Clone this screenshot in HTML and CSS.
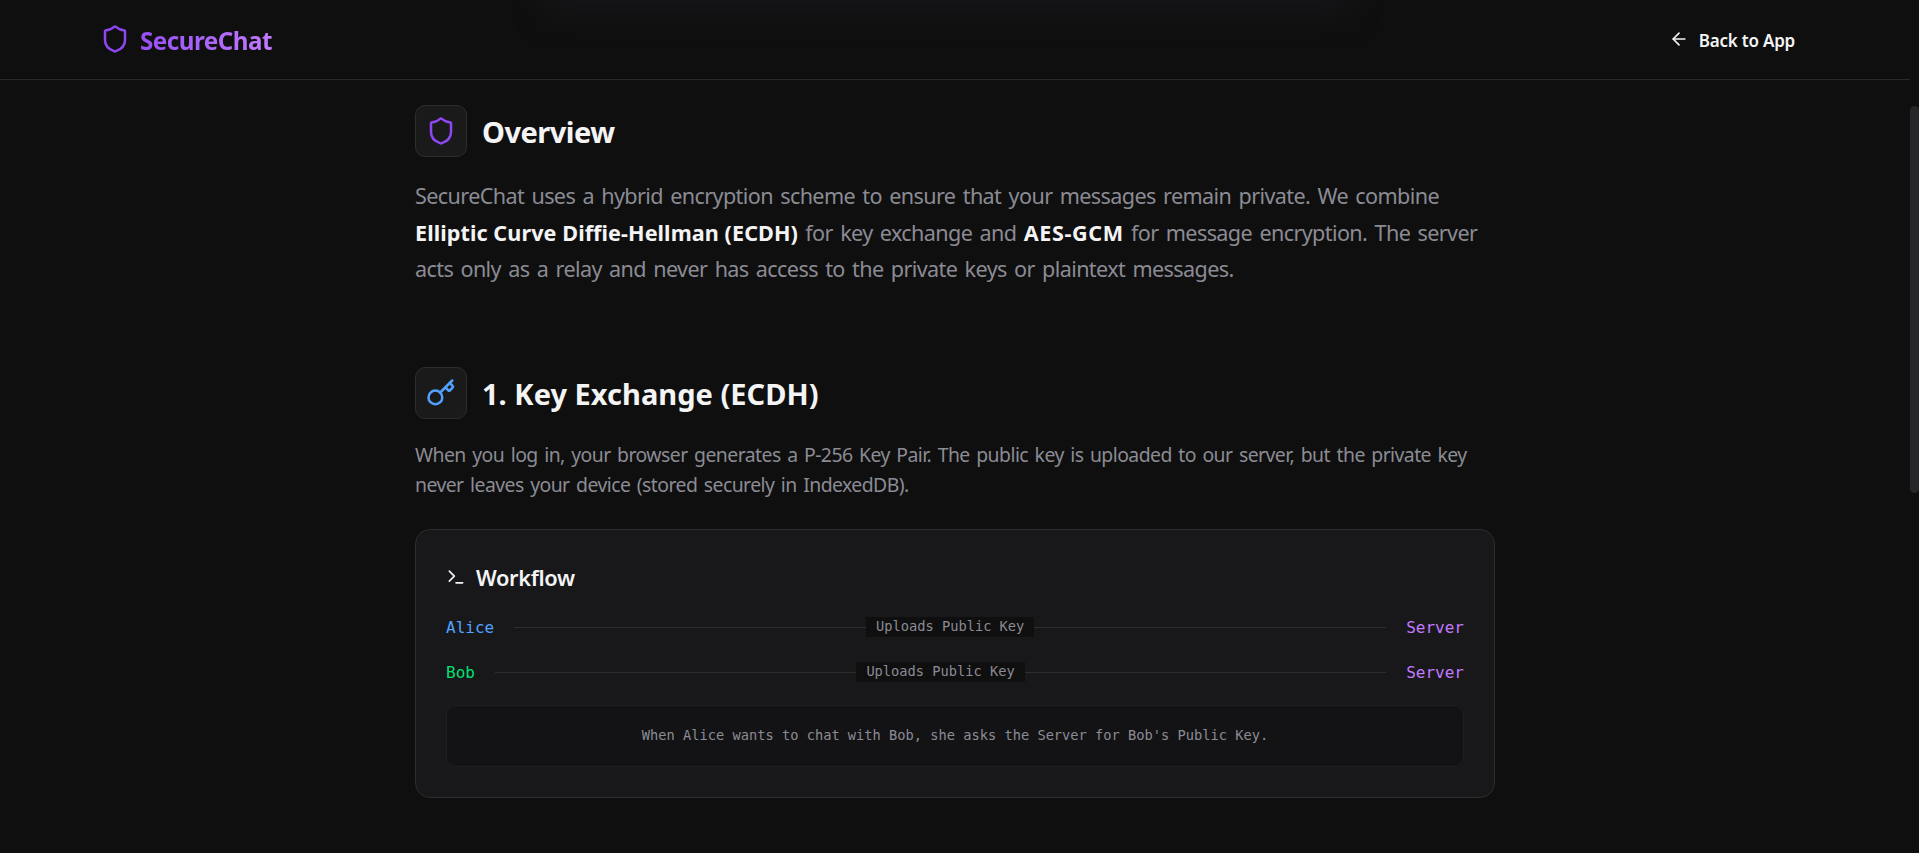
FILE: index.html
```
<!DOCTYPE html>
<html lang="en">
<head>
<meta charset="utf-8">
<title>SecureChat</title>
<link rel="stylesheet" href="styles.css">
</head>
<body>
<div class="page">
  <header class="header">
    <div class="glow"></div>
    <div class="brand">
      <svg class="icon-lg purple" viewBox="0 0 24 24"><path d="M20 13c0 5-3.5 7.5-7.66 8.95a1 1 0 0 1-.67-.01C7.5 20.5 4 18 4 13V6a1 1 0 0 1 1-1c2 0 4.5-1.2 6.24-2.72a1.17 1.17 0 0 1 1.52 0C14.51 3.81 17 5 19 5a1 1 0 0 1 1 1z"/></svg>
      <span class="brand-name">SecureChat</span>
    </div>
    <a class="back">
      <svg class="icon-sm" viewBox="0 0 24 24"><path d="m12 19-7-7 7-7"/><path d="M19 12H5"/></svg>
      <span>Back to App</span>
    </a>
  </header>

  <main class="content">
    <section>
      <div class="section-head">
        <div class="icon-box">
          <svg class="icon-lg purple" viewBox="0 0 24 24"><path d="M20 13c0 5-3.5 7.5-7.66 8.95a1 1 0 0 1-.67-.01C7.5 20.5 4 18 4 13V6a1 1 0 0 1 1-1c2 0 4.5-1.2 6.24-2.72a1.17 1.17 0 0 1 1.52 0C14.51 3.81 17 5 19 5a1 1 0 0 1 1 1z"/></svg>
        </div>
        <h2 class="title overview">Overview</h2>
      </div>
      <p class="lead">SecureChat uses a hybrid encryption scheme to ensure that your messages remain private. We combine<br><strong>Elliptic Curve Diffie-Hellman (ECDH)</strong> for key exchange and <strong class="aes">AES-GCM</strong> for message encryption. The server<br>acts only as a relay and never has access to the private keys or plaintext messages.</p>
    </section>

    <section>
      <div class="section-head">
        <div class="icon-box">
          <svg class="icon-lg blue" viewBox="0 0 24 24"><path d="m15.5 7.5 2.3 2.3a1 1 0 0 0 1.4 0l2.1-2.1a1 1 0 0 0 0-1.4L19 4"/><path d="m21 2-9.6 9.6"/><circle cx="7.5" cy="15.5" r="5.5"/></svg>
        </div>
        <h2 class="title">1. Key Exchange (ECDH)</h2>
      </div>
      <p class="text">When you log in, your browser generates a P-256 Key Pair. The public key is uploaded to our server, but the private key<br>never leaves your device (stored securely in IndexedDB).</p>

      <div class="card">
        <h3 class="card-title">
          <svg class="icon-sm" viewBox="0 0 24 24"><path d="m4 17 6-6-6-6"/><path d="M12 19h8"/></svg>
          <span>Workflow</span>
        </h3>
        <div class="flow">
          <span class="blue">Alice</span>
          <div class="line"><span class="tag">Uploads Public Key</span></div>
          <span class="server">Server</span>
        </div>
        <div class="flow">
          <span class="green">Bob</span>
          <div class="line"><span class="tag">Uploads Public Key</span></div>
          <span class="server">Server</span>
        </div>
        <div class="note">When Alice wants to chat with Bob, she asks the Server for Bob's Public Key.</div>
      </div>
    </section>
  </main>
</div>
<div class="scroll-thumb"></div>
</body>
</html>
```
FILE: styles.css
```
* { box-sizing: border-box; margin: 0; padding: 0; }

body {
  height: 853px;
  overflow: hidden;
  background: #0f0f0f;
  color: #f4f4f5;
  font-family: "Noto Sans", "Open Sans", sans-serif;
}

.page { width: 1910px; }

.header {
  position: relative;
  display: flex;
  align-items: center;
  justify-content: space-between;
  height: 80px;
  padding: 0 115px 2px 100px;
  border-bottom: 1px solid #29292a;
  overflow: hidden;
}

/* soft haze of the content scrolled under the header */
.glow {
  position: absolute;
  left: 545px;
  top: -40px;
  width: 805px;
  height: 54px;
  background: #151518;
  filter: blur(14px);
}

svg {
  display: block;
  flex: none;
  fill: none;
  stroke: currentColor;
  stroke-width: 2;
  stroke-linecap: round;
  stroke-linejoin: round;
}

.icon-lg { width: 30px; height: 30px; }
.icon-sm { width: 20px; height: 20px; }

.purple { color: #8f47f2; }
.blue { color: #51a2ff; }
.green { color: #05df72; }
.server { color: #c27aff; }

.brand { position: relative; display: flex; align-items: center; gap: 10px; }

.brand-name {
  padding-top: 3px;
  background: linear-gradient(90deg, #9650f5, #c27aff);
  background-clip: text;
  -webkit-background-clip: text;
  color: transparent;
  font-size: 24.2px;
  font-weight: 700;
  line-height: 35px;
  letter-spacing: -0.5px;
}

.back {
  display: flex;
  align-items: center;
  gap: 10px;
  font-size: 17px;
  font-weight: 600;
  line-height: 25px;
  letter-spacing: -0.22px;
}

.back span { padding-top: 3px; }

.content {
  display: flex;
  flex-direction: column;
  gap: 80px;
  width: 1080px;
  margin: 25px auto 0;
}

.section-head { display: flex; align-items: center; gap: 15px; }

.icon-box {
  padding: 10px;
  border: 1px solid #2d2d2e;
  border-radius: 10px;
  background: #1a1a1b;
}

.title {
  padding-top: 2px;
  font-size: 29px;
  font-weight: 700;
  line-height: 40px;
  letter-spacing: 0.03px;
}

.overview { letter-spacing: -0.5px; }

.lead {
  margin-top: 21px;
  margin-bottom: -1px;
  color: #8b8b94;
  font-size: 21.6px;
  line-height: 36.56px;
  letter-spacing: -0.64px;
  word-spacing: 2.3px;
  white-space: nowrap;
}

.lead { letter-spacing: -0.62px; }
.lead strong { color: #f4f4f5; font-weight: 700; letter-spacing: 0.08px; word-spacing: 0; }
.lead .aes { letter-spacing: 0.6px; }

.text {
  margin-top: 21px;
  color: #8b8b94;
  font-size: 19.4px;
  line-height: 30px;
  letter-spacing: -0.55px;
  word-spacing: 2px;
  white-space: nowrap;
}

.card {
  display: flex;
  flex-direction: column;
  gap: 20px;
  margin-top: 29px;
  padding: 30px;
  border: 1px solid #2d2d2e;
  border-radius: 15px;
  background: #18181a;
}

.card-title {
  display: flex;
  align-items: center;
  gap: 10px;
  font-size: 21.8px;
  font-weight: 600;
  line-height: 35px;
  letter-spacing: -0.35px;
}

.flow {
  display: flex;
  align-items: center;
  gap: 20px;
  height: 25px;
  font: 16px/25px "DejaVu Sans Mono", monospace;
}

.line {
  display: flex;
  align-items: center;
  justify-content: center;
  flex: 1;
  height: 20px;
  background: linear-gradient(#2d2d2e, #2d2d2e) center / 100% 1px no-repeat;
}

.tag {
  padding: 0 10px 2px;
  background: #0f0f0f;
  color: #8b8b94;
  font-size: 13.7px;
  line-height: 18px;
}

.note {
  padding: 19px 20px 21px;
  border: 1px solid #1f1f21;
  border-radius: 10px;
  background: #131315;
  color: #8b8b94;
  font: 13.7px/20px "DejaVu Sans Mono", monospace;
  text-align: center;
}

.scroll-thumb {
  position: absolute;
  left: 1910px;
  top: 106px;
  width: 9px;
  height: 387px;
  border-radius: 4.5px;
  background: #27272a;
}
```
